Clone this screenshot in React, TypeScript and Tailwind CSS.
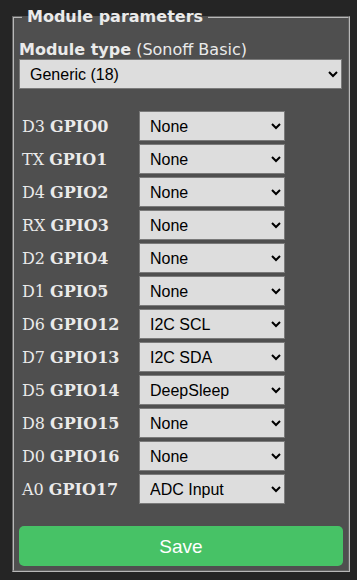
import React from 'react';

const rows = [
  { pin: 'D3', gpio: 'GPIO0', value: 'None' },
  { pin: 'TX', gpio: 'GPIO1', value: 'None' },
  { pin: 'D4', gpio: 'GPIO2', value: 'None' },
  { pin: 'RX', gpio: 'GPIO3', value: 'None' },
  { pin: 'D2', gpio: 'GPIO4', value: 'None' },
  { pin: 'D1', gpio: 'GPIO5', value: 'None' },
  { pin: 'D6', gpio: 'GPIO12', value: 'I2C SCL' },
  { pin: 'D7', gpio: 'GPIO13', value: 'I2C SDA' },
  { pin: 'D5', gpio: 'GPIO14', value: 'DeepSleep' },
  { pin: 'D8', gpio: 'GPIO15', value: 'None' },
  { pin: 'D0', gpio: 'GPIO16', value: 'None' },
  { pin: 'A0', gpio: 'GPIO17', value: 'ADC Input' },
];

const options = ['None', 'I2C SCL', 'I2C SDA', 'DeepSleep', 'ADC Input'];

export default function App() {
  return (
    <div className="w-[357px] min-h-[580px] bg-[#252525] pt-[7px] text-[#eaeaea] font-['DejaVu_Sans',Verdana,sans-serif] text-[16px] leading-[19px]">
      <fieldset className="ml-[12px] w-[338px] border-2 border-[#b8b8b8] [border-style:groove] bg-[#4f4f4f] px-[5px] pb-[4px]">
        <legend className="ml-[3px] px-[5px] font-bold leading-[20px]">Module parameters</legend>

        <div className="mt-[13px]">
          <b>Module type</b> (Sonoff Basic)
        </div>
        <select
          defaultValue="Generic (18)"
          className="block w-[323px] h-[30px] bg-[#dddddd] text-black border border-[#7a7a7a] pl-[6px] font-['Liberation_Sans',Arial,sans-serif] text-[16px]"
        >
          <option>Generic (18)</option>
          <option>Sonoff Basic (1)</option>
        </select>

        <div className="mt-[22px] flex flex-col gap-[3px]">
          {rows.map((r) => (
            <div key={r.gpio} className="flex items-center h-[30px]">
              <div className="w-[120px] pl-[3px] font-['DejaVu_Serif',serif] text-[16px]">
                {r.pin} <b>{r.gpio}</b>
              </div>
              <select
                defaultValue={r.value}
                className="w-[146px] h-[30px] bg-[#dddddd] text-black border border-[#7a7a7a] pl-[6px] font-['Liberation_Sans',Arial,sans-serif] text-[16px]"
              >
                {options.map((o) => (
                  <option key={o}>{o}</option>
                ))}
              </select>
            </div>
          ))}
        </div>

        <button className="mt-[22px] mb-[0px] w-[324px] h-[40px] rounded-[5px] bg-[#47c266] text-white font-['Liberation_Sans',Arial,sans-serif] text-[19px]">
          Save
        </button>
      </fieldset>
    </div>
  );
}
